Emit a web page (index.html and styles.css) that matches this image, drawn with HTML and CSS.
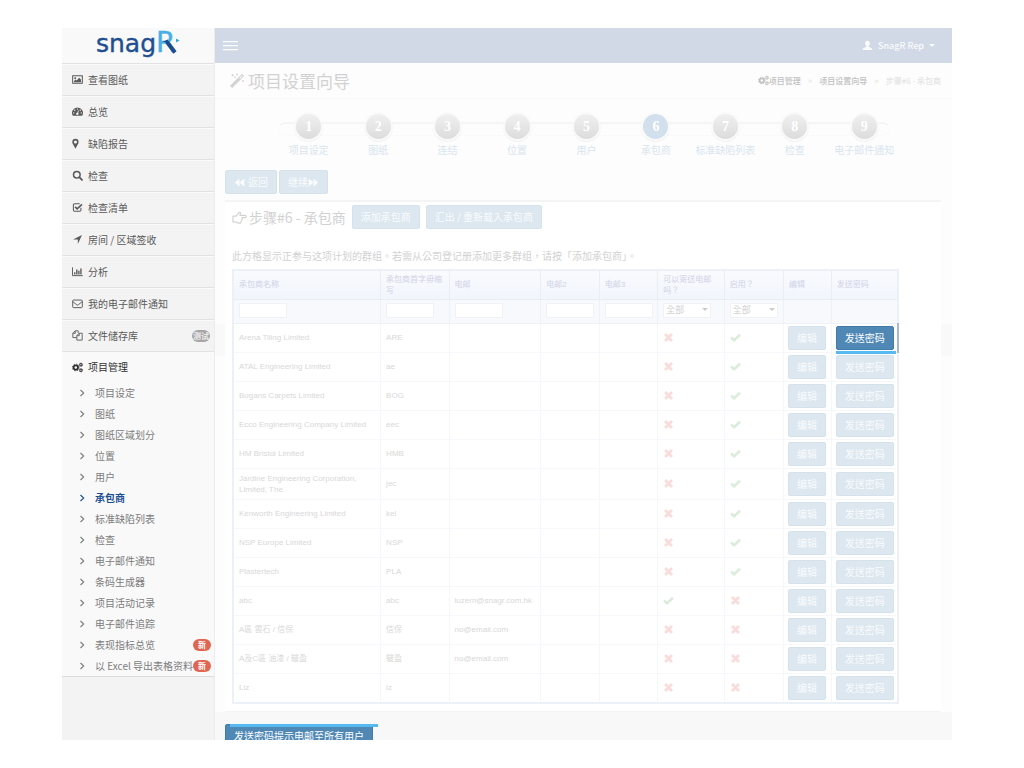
FILE: index.html
```html
<!DOCTYPE html>
<html lang="zh-Hans">
<head>
<meta charset="utf-8">
<title>项目设置向导 - snagR</title>
<link rel="stylesheet" href="styles.css">
</head>
<body>
<svg class="sprite" aria-hidden="true">
  <symbol id="i-image" viewBox="0 0 16 16"><path d="M1 2.5h14v11H1z" fill="none" stroke="currentColor" stroke-width="1.5"/><circle cx="4.7" cy="6" r="1.4"/><path d="M3 12V10l2.200-2 1.500 1.500L10.500 5.500 13 8v4z"/></symbol>
  <symbol id="i-dash" viewBox="0 0 16 16"><path fill-rule="evenodd" d="M8 2a8 8 0 0 1 6.800 12.200H1.200A8 8 0 0 1 8 2zM8 3.500a1 1 0 1 0 0 2 1 1 0 0 0 0-2zM4 5.200a1 1 0 1 0 0 2 1 1 0 0 0 0-2zM2.500 9a1 1 0 1 0 0 2 1 1 0 0 0 0-2zM13.500 9a1 1 0 1 0 0 2 1 1 0 0 0 0-2zM12 5.200a1 1 0 1 0 0 2 1 1 0 0 0 0-2zM9 6.500 7.600 9.700a1.700 1.700 0 1 0 1.400.4l1-3.400z"/></symbol>
  <symbol id="i-pin" viewBox="0 0 16 16"><path fill-rule="evenodd" d="M5 1a4.700 4.700 0 0 1 4.600 4.800c0 1-.3 1.800-.7 2.600L5 15.500 1.100 8.400a5 5 0 0 1-.7-2.600A4.700 4.700 0 0 1 5 1zm0 2.500a2.300 2.300 0 1 0 0 4.600 2.300 2.300 0 0 0 0-4.600z"/></symbol>
  <symbol id="i-search" viewBox="0 0 16 16"><circle cx="7" cy="7" r="4.800" fill="none" stroke="currentColor" stroke-width="2.200"/><path d="M10.500 10.500 14.500 14.500" stroke="currentColor" stroke-width="2.600" stroke-linecap="round"/></symbol>
  <symbol id="i-check-sq" viewBox="0 0 16 16"><path d="M13 8.500v3.200a1.800 1.800 0 0 1-1.800 1.800H3.800A1.800 1.800 0 0 1 2 11.700V4.300a1.800 1.800 0 0 1 1.800-1.800h7.400" fill="none" stroke="currentColor" stroke-width="1.500"/><path d="M4.500 7l3 3L14.500 3.500" fill="none" stroke="currentColor" stroke-width="2.400"/></symbol>
  <symbol id="i-arrow" viewBox="0 0 16 16"><path d="M14.500 1.500 8.500 14.500V8H1.500z"/></symbol>
  <symbol id="i-chart" viewBox="0 0 16 16"><path d="M.7 2v12h15" fill="none" stroke="currentColor" stroke-width="1.400"/><path d="M3 9h2v3.500H3zM6 5h2v7.500H6zM9 7h2v5.500H9zM12 3.500h2v9h-2z"/></symbol>
  <symbol id="i-mail" viewBox="0 0 16 16"><rect x="1" y="3" width="14" height="11" rx="1.200" fill="none" stroke="currentColor" stroke-width="1.400"/><path d="M1.500 5.500 7 10q1 .7 2 0l5.500-4.500" fill="none" stroke="currentColor" stroke-width="1.400"/></symbol>
  <symbol id="i-copy" viewBox="0 0 16 16"><path d="M7 11H1.200V4.800L4.800 1.200H9v3M4.800 1.200v3.600H1.200M7 8.300l3.300-3.600h4.500v10H7zM10.500 4.700v3.600H7" fill="none" stroke="currentColor" stroke-width="1.300"/></symbol>
  <symbol id="i-cogs" viewBox="0 0 16 16"><circle cx="5.500" cy="8" r="3.200" fill="none" stroke="currentColor" stroke-width="2.600"/><circle cx="5.500" cy="8" r="4.900" fill="none" stroke="currentColor" stroke-width="1.300" stroke-dasharray="1.900 1.950"/><circle cx="13" cy="4" r="1.700" fill="none" stroke="currentColor" stroke-width="1.500"/><circle cx="13" cy="4" r="2.600" fill="none" stroke="currentColor" stroke-width=".8" stroke-dasharray="1.300 1.300"/><circle cx="13" cy="12" r="1.700" fill="none" stroke="currentColor" stroke-width="1.500"/><circle cx="13" cy="12" r="2.600" fill="none" stroke="currentColor" stroke-width=".8" stroke-dasharray="1.300 1.300"/></symbol>
  <symbol id="i-angle" viewBox="0 0 8 8"><path d="M2.500 1 5.700 4 2.500 7" fill="none" stroke="currentColor" stroke-width="1.100"/></symbol>
  <symbol id="i-wand" viewBox="0 0 16 16"><path fill-rule="evenodd" d="M13 .8 15.200 3 3.200 15 1 12.800zM13 2.200 10.300 4.900l.8.8L13.800 3z"/><path d="M3.500 1v2.600M2.200 2.300h2.600M8 .5v2M7 1.500h2M6 3.500v1.600M5.200 4.300h1.600M14 7v2M13 8h2" stroke="currentColor" stroke-width=".8"/></symbol>
  <symbol id="i-hand" viewBox="0 0 16 16"><path d="M1 6.500h3.500L7.500 2.500q1.800-.5 1.500 1.500L8.300 5.700H14q1.200.2 1.200 1.200T14 8.100h-3.200q1 1.400-.5 2.300.6 1.400-.7 2 .2 1.600-1.600 1.600-2 .1-3.500-1.200H1z" fill="none" stroke="currentColor" stroke-width="1.200" stroke-linejoin="round"/></symbol>
  <symbol id="i-back" viewBox="0 0 16 16"><path d="M8 2v12L1 8zM15 2v12L8 8z"/></symbol>
  <symbol id="i-next" viewBox="0 0 16 16"><path d="M1 2v12l7-6zM8 2v12l7-6z"/></symbol>
  <symbol id="i-user" viewBox="0 0 16 16"><path d="M8 1c2.300 0 3.500 1.600 3.500 3.700 0 1.700-.7 3.200-1.800 4v1.200c.8 1 5.300 1.300 5.300 4.600H1c0-3.300 4.500-3.600 5.300-4.600V8.700c-1.100-.8-1.800-2.300-1.800-4C4.500 2.600 5.700 1 8 1z"/></symbol>
  <symbol id="i-x" viewBox="0 0 16 16"><path d="M3 3l10 10M13 3 3 13" stroke="currentColor" stroke-width="4.200"/></symbol>
  <symbol id="i-ok" viewBox="0 0 16 16"><path d="M1.500 8 6 12 14.500 4" fill="none" stroke="currentColor" stroke-width="3.800"/></symbol>
</svg>

<div class="shell">
  <aside class="sidebar">
    <a class="logo" href="#" aria-label="snagR">
      <svg width="86" height="34" viewBox="0 0 86 34">
        <text class="logo-snag" x="1" y="24">snag</text>
        <text class="logo-r" x="61" y="24">R</text>
        <path d="M72 14 80 24.500" stroke="#1c4c8c" stroke-width="4"/>
        <path d="M68 13.500l5-2v4z" fill="#1c4c8c"/>
        <path d="M81 10.500l3.500 2-3.500 2z" fill="#35a6de"/>
      </svg>
    </a>
    <nav>
      <ul class="menu">
        <li><a href="#"><svg class="icon"><use href="#i-image"/></svg>查看图纸</a></li>
        <li><a href="#"><svg class="icon"><use href="#i-dash"/></svg>总览</a></li>
        <li><a href="#"><svg class="icon"><use href="#i-pin"/></svg>缺陷报告</a></li>
        <li><a href="#"><svg class="icon"><use href="#i-search"/></svg>检查</a></li>
        <li><a href="#"><svg class="icon"><use href="#i-check-sq"/></svg>检查清单</a></li>
        <li><a href="#"><svg class="icon"><use href="#i-arrow"/></svg>房间 / 区域签收</a></li>
        <li><a href="#"><svg class="icon"><use href="#i-chart"/></svg>分析</a></li>
        <li><a href="#"><svg class="icon"><use href="#i-mail"/></svg>我的电子邮件通知</a></li>
        <li><a href="#"><svg class="icon"><use href="#i-copy"/></svg>文件储存库<span class="badge badge-grey">测试</span></a></li>
        <li class="open"><a href="#"><svg class="icon"><use href="#i-cogs"/></svg>项目管理</a>
          <ul class="submenu">
            <li><a href="#"><svg class="angle"><use href="#i-angle"/></svg>项目设定</a></li>
            <li><a href="#"><svg class="angle"><use href="#i-angle"/></svg>图纸</a></li>
            <li><a href="#"><svg class="angle"><use href="#i-angle"/></svg>图纸区域划分</a></li>
            <li><a href="#"><svg class="angle"><use href="#i-angle"/></svg>位置</a></li>
            <li><a href="#"><svg class="angle"><use href="#i-angle"/></svg>用户</a></li>
            <li><a class="current" href="#"><svg class="angle"><use href="#i-angle"/></svg>承包商</a></li>
            <li><a href="#"><svg class="angle"><use href="#i-angle"/></svg>标准缺陷列表</a></li>
            <li><a href="#"><svg class="angle"><use href="#i-angle"/></svg>检查</a></li>
            <li><a href="#"><svg class="angle"><use href="#i-angle"/></svg>电子邮件通知</a></li>
            <li><a href="#"><svg class="angle"><use href="#i-angle"/></svg>条码生成器</a></li>
            <li><a href="#"><svg class="angle"><use href="#i-angle"/></svg>项目活动记录</a></li>
            <li><a href="#"><svg class="angle"><use href="#i-angle"/></svg>电子邮件追踪</a></li>
            <li><a href="#"><svg class="angle"><use href="#i-angle"/></svg>表现指标总览<span class="badge badge-red">新</span></a></li>
            <li><a href="#"><svg class="angle"><use href="#i-angle"/></svg>以 Excel 导出表格资料<span class="badge badge-red">新</span></a></li>
          </ul>
        </li>
      </ul>
    </nav>
  </aside>

  <div class="main" lang="zh-Hant">
    <header class="topbar">
      <button class="burger" type="button" aria-label="菜单"><span></span><span></span><span></span></button>
      <button class="user" type="button"><svg class="icon"><use href="#i-user"/></svg>SnagR Rep<span class="caret"></span></button>
    </header>
    <div class="titlebar">
      <h1><svg class="icon-lg"><use href="#i-wand"/></svg>项目设置向导</h1>
      <nav class="crumbs"><a href="#"><svg class="icon"><use href="#i-cogs"/></svg>项目管理</a><span>&gt;</span><a href="#">项目设置向导</a><span>&gt;</span><span>步骤#6 - 承包商</span></nav>
    </div>

    <div class="content">
      <ol class="steps">
        <li><a href="#"><b>1</b>项目设定</a></li>
        <li><a href="#"><b>2</b>图纸</a></li>
        <li><a href="#"><b>3</b>连结</a></li>
        <li><a href="#"><b>4</b>位置</a></li>
        <li><a href="#"><b>5</b>用户</a></li>
        <li class="active"><a href="#"><b>6</b>承包商</a></li>
        <li><a href="#"><b>7</b>标准缺陷列表</a></li>
        <li><a href="#"><b>8</b>检查</a></li>
        <li><a href="#"><b>9</b>电子邮件通知</a></li>
      </ol>
      <div class="pager">
        <button class="btn" type="button"><svg class="icon back"><use href="#i-back"/></svg>返回</button>
        <button class="btn" type="button">继续<svg class="icon"><use href="#i-next"/></svg></button>
      </div>

      <section class="panel">
        <div class="panel-head">
          <h2><svg class="icon-md"><use href="#i-hand"/></svg>步骤#6 - 承包商</h2>
          <button class="btn" type="button">添加承包商</button>
          <button class="btn" type="button">汇出 / 重新载入承包商</button>
        </div>
        <p class="help">此方格显示正参与这项计划的群组。若需从公司登记册添加更多群组，请按「添加承包商」。</p>
        <table class="grid">
          <colgroup><col class="c-name"><col class="c-init"><col class="c-mail"><col class="c-mail2"><col class="c-mail2"><col class="c-can"><col class="c-on"><col class="c-edit"><col class="c-send"></colgroup>
          <thead>
            <tr><th>承包商名称</th><th>承包商首字毋缩写</th><th>电邮</th><th>电邮2</th><th>电邮3</th><th>可以寄送电邮吗？</th><th>启用？</th><th>编辑</th><th>发送密码</th></tr>
            <tr class="filter">
              <td><input type="text" aria-label="承包商名称"></td>
              <td><input type="text" aria-label="承包商首字毋缩写"></td>
              <td><input type="text" aria-label="电邮"></td>
              <td><input type="text" aria-label="电邮2"></td>
              <td><input type="text" aria-label="电邮3"></td>
              <td><span class="select"><select aria-label="可以寄送电邮吗？"><option>全部</option></select></span></td>
              <td><span class="select"><select aria-label="启用？"><option>全部</option></select></span></td>
              <td></td><td></td>
            </tr>
          </thead>
          <tbody>
            <tr><td>Arena Tiling Limited</td><td>ARE</td><td></td><td></td><td></td><td><svg class="no"><use href="#i-x"/></svg></td><td><svg class="yes"><use href="#i-ok"/></svg></td><td><button class="btn" type="button">编辑</button></td><td class="focus"><span class="marked"><button class="btn btn-strong" type="button">发送密码</button></span></td></tr>
            <tr><td>ATAL Engineering Limited</td><td>ae</td><td></td><td></td><td></td><td><svg class="no"><use href="#i-x"/></svg></td><td><svg class="yes"><use href="#i-ok"/></svg></td><td><button class="btn" type="button">编辑</button></td><td><button class="btn" type="button">发送密码</button></td></tr>
            <tr><td>Bogans Carpets Limited</td><td>BOG</td><td></td><td></td><td></td><td><svg class="no"><use href="#i-x"/></svg></td><td><svg class="yes"><use href="#i-ok"/></svg></td><td><button class="btn" type="button">编辑</button></td><td><button class="btn" type="button">发送密码</button></td></tr>
            <tr><td>Ecco Engineering Company Limited</td><td>eec</td><td></td><td></td><td></td><td><svg class="no"><use href="#i-x"/></svg></td><td><svg class="yes"><use href="#i-ok"/></svg></td><td><button class="btn" type="button">编辑</button></td><td><button class="btn" type="button">发送密码</button></td></tr>
            <tr><td>HM Bristol Limited</td><td>HMB</td><td></td><td></td><td></td><td><svg class="no"><use href="#i-x"/></svg></td><td><svg class="yes"><use href="#i-ok"/></svg></td><td><button class="btn" type="button">编辑</button></td><td><button class="btn" type="button">发送密码</button></td></tr>
            <tr><td>Jardine Engineering Corporation, Limited, The</td><td>jec</td><td></td><td></td><td></td><td><svg class="no"><use href="#i-x"/></svg></td><td><svg class="yes"><use href="#i-ok"/></svg></td><td><button class="btn" type="button">编辑</button></td><td><button class="btn" type="button">发送密码</button></td></tr>
            <tr><td>Kenworth Engineering Limited</td><td>kel</td><td></td><td></td><td></td><td><svg class="no"><use href="#i-x"/></svg></td><td><svg class="yes"><use href="#i-ok"/></svg></td><td><button class="btn" type="button">编辑</button></td><td><button class="btn" type="button">发送密码</button></td></tr>
            <tr><td>NSP Europe Limited</td><td>NSP</td><td></td><td></td><td></td><td><svg class="no"><use href="#i-x"/></svg></td><td><svg class="yes"><use href="#i-ok"/></svg></td><td><button class="btn" type="button">编辑</button></td><td><button class="btn" type="button">发送密码</button></td></tr>
            <tr><td>Plastertech</td><td>PLA</td><td></td><td></td><td></td><td><svg class="no"><use href="#i-x"/></svg></td><td><svg class="yes"><use href="#i-ok"/></svg></td><td><button class="btn" type="button">编辑</button></td><td><button class="btn" type="button">发送密码</button></td></tr>
            <tr><td>abc</td><td>abc</td><td>luzern@snagr.com.hk</td><td></td><td></td><td><svg class="yes"><use href="#i-ok"/></svg></td><td><svg class="no"><use href="#i-x"/></svg></td><td><button class="btn" type="button">编辑</button></td><td><button class="btn" type="button">发送密码</button></td></tr>
            <tr><td>A區 雲石 / 信保</td><td>信保</td><td>no@email.com</td><td></td><td></td><td><svg class="no"><use href="#i-x"/></svg></td><td><svg class="no"><use href="#i-x"/></svg></td><td><button class="btn" type="button">编辑</button></td><td><button class="btn" type="button">发送密码</button></td></tr>
            <tr><td>A及C區 油漆 / 駿盈</td><td>駿盈</td><td>no@email.com</td><td></td><td></td><td><svg class="no"><use href="#i-x"/></svg></td><td><svg class="no"><use href="#i-x"/></svg></td><td><button class="btn" type="button">编辑</button></td><td><button class="btn" type="button">发送密码</button></td></tr>
            <tr><td>Liz</td><td>lz</td><td></td><td></td><td></td><td><svg class="no"><use href="#i-x"/></svg></td><td><svg class="no"><use href="#i-x"/></svg></td><td><button class="btn" type="button">编辑</button></td><td><button class="btn" type="button">发送密码</button></td></tr>
          </tbody>
        </table>
      </section>
    </div>

    <footer class="foot">
      <span class="marked marked-top"><button class="btn btn-strong" type="button">发送密码提示电邮至所有用户</button></span>
    </footer>
  </div>
</div>
</body>
</html>
```
FILE: styles.css
```css
* { box-sizing: border-box; }

body {
  margin: 0;
  padding: 28px 72px 28px 62px;
  height: 100vh;
  background: #fff;
  font: 10px/14px "Noto Sans CJK TC", "Noto Sans CJK SC", sans-serif;
  color: #d2d2d2;
}

ul, ol { margin: 0; padding: 0; list-style: none; }
h1, h2, p { margin: 0; font-weight: 400; }
a { color: inherit; text-decoration: none; }
button, input, select { font: inherit; color: inherit; }
svg { flex: none; fill: currentColor; }

.sprite { position: absolute; width: 0; height: 0; }
.icon { width: 11px; height: 11px; }
.icon-md { width: 15px; height: 15px; }
.icon-lg { width: 16px; height: 16px; }

.shell { display: flex; height: 100%; overflow: hidden; }

/* Sidebar */
.sidebar {
  flex: none;
  width: 153px;
  background: #f3f3f3;
  border-right: 1px solid #ececec;
  color: #5a5a5a;
  font-family: "Noto Sans CJK SC", sans-serif;
}
.logo { display: flex; justify-content: center; height: 35px; background: #f9f9f9; }
.logo svg { overflow: visible; }
.logo-snag { font: 25px "DejaVu Sans", sans-serif; fill: #1f4f91; stroke: #1f4f91; stroke-width: .4; }
.logo-r { font: 28px "DejaVu Sans", sans-serif; fill: #48b0e4; stroke: #48b0e4; stroke-width: .4; }
.menu > li { border-top: 1px solid #e2e2e2; box-shadow: inset 0 1px #fafafa; }
.menu > li > a { display: flex; align-items: center; gap: 5px; height: 31px; padding: 0 4px 0 10px; }
.menu > .open { background: #f9f9f9; border-bottom: 1px solid #dcdcdc; }
.menu > .open > a { height: 30px; color: #303030; }
.submenu a { display: flex; align-items: center; height: 21px; padding: 0 3px 0 16px; color: #7c7c7c; white-space: nowrap; }
.submenu .current { color: #1d4f91; font-weight: 700; }
.angle { width: 8px; height: 8px; margin-right: 9px; }
.badge {
  margin-left: auto;
  padding: 0 5px;
  border-radius: 6px;
  font-size: 8px;
  line-height: 12px;
  font-weight: 700;
  text-align: center;
  color: #fff;
}
.badge-grey { padding: 0 1px; background: #a6a6a6; color: #ececec; }
.badge-red { background: #e06653; }

/* Top bars */
.main { flex: 1; min-width: 0; display: flex; flex-direction: column; background: #fdfdfd; }
.topbar { flex: none; display: flex; align-items: center; justify-content: space-between; height: 35px; padding: 0 17px 0 8px; background: #d1d9e6; color: #fafbfd; }
.burger { display: grid; gap: 3px; width: 15px; padding: 0; border: 0; background: none; }
.burger span { height: 1px; background: #fafbfd; box-shadow: 0 1px #dde3ed; }
.user { display: flex; align-items: center; gap: 5px; padding: 0; border: 0; background: none; font-size: 9px; font-weight: 500; }
.caret { border: 3px solid transparent; border-top-color: currentColor; border-bottom: 0; }
.titlebar { flex: none; display: flex; align-items: center; justify-content: space-between; height: 36px; padding: 0 11px 0 14px; border-bottom: 1px solid #f8f8f8; }
h1 { display: flex; align-items: center; gap: 3px; font-size: 17px; line-height: 24px; }
.crumbs { display: flex; align-items: center; gap: 7px; font-size: 8px; color: #dedede; }
.crumbs a { display: flex; align-items: center; color: #c0c0c0; font-weight: 500; }

/* Wizard steps */
.content {
  flex: none;
  padding: 15px 11px 0 10px;
  background: linear-gradient(transparent 225px, #f9f9f9 225px, #f9f9f9 257px, transparent 257px);
}
.steps { position: relative; display: grid; grid-template-columns: repeat(9, 1fr); margin: 0 42px 0 49px; }
.steps::before {
  content: "";
  position: absolute;
  left: 5px;
  right: 10px;
  top: 8px;
  height: 11px;
  border: 1px solid #fafafa;
  border-top: 2px solid #f5f5f5;
  border-radius: 6px;
}
.steps a { position: relative; display: grid; justify-items: center; gap: 4px; color: #d9e5ef; white-space: nowrap; }
.steps b {
  width: 25px;
  height: 25px;
  border-radius: 50%;
  background: linear-gradient(#f0f0f0, #dcdcdc);
  box-shadow: 0 0 0 2px #fafafa, 0 1px 2px 1px #dcdcdc;
  font: 700 14px/25px "Liberation Serif", serif;
  text-align: center;
  color: #fff;
}
.steps .active b { background: #d2dfec; }

/* Buttons */
.btn {
  display: inline-flex;
  align-items: center;
  justify-content: center;
  height: 24px;
  padding: 0 8px;
  border: 1px solid #d5e2ec;
  border-radius: 2px;
  background: #dce7ef;
  color: #fafcfd;
  white-space: nowrap;
}
.btn .back { margin-right: 3px; }
.btn-strong { background: #4f88b5; border-color: #427ba9; color: #fff; }
.pager { display: flex; gap: 2px; padding: 13px 0 6px; }

/* The bar underlines or overlines a highlighted action */
.marked { position: relative; display: inline-flex; vertical-align: top; }
.marked::after { content: ""; position: absolute; left: 0; right: -2px; bottom: -4px; height: 3px; background: #56b9f2; }
.marked-top::after { left: 5px; right: -5px; top: 0; bottom: auto; }

/* Panel and table */
.panel { padding: 3px 7px 7px; border-top: 2px solid #f4f4f4; background: #fff; border-bottom: 1px solid #f4f4f4; }
.panel-head { display: flex; align-items: center; gap: 6px; }
h2 { display: flex; align-items: center; gap: 2px; font-size: 14px; line-height: 24px; }
.help { margin: 20px 0 6px; }

.grid { width: 95%; table-layout: fixed; border-collapse: collapse; border: 2px solid #ecf0f7; font: 8px/11px "Liberation Sans", "Noto Sans CJK TC", sans-serif; }
.c-name { width: 22.2%; }
.c-init { width: 10.3%; }
.c-mail { width: 13.8%; }
.c-mail2 { width: 8.8%; }
.c-can { width: 10%; }
.c-on { width: 8.9%; }
.c-edit { width: 7.2%; }
.c-send { width: 10%; }
.grid th, .grid td { height: 29px; padding: 0 5px; border: 1px solid #f5f7fb; text-align: left; vertical-align: middle; }
.grid th { border-color: #e8edf6; background: linear-gradient(#f9fafd, #f1f5fc); color: #d0d2e6; font-weight: 400; }
.grid .filter td { height: 24px; padding: 3px 5px; border-color: #eef1f8; background: #f7f9fc; vertical-align: top; }
.grid tbody td { padding: 4px 5px; }
.grid tbody td:nth-last-child(-n+2) { padding: 2px 4px; }
.grid tbody { color: #d8d8d8; }
.grid svg { display: block; width: 11px; height: 11px; }
.grid .btn { display: flex; font: 10px/14px "Noto Sans CJK TC", sans-serif; }
.grid .focus { border-top-color: #c9d0df; border-right: 2px solid #a9b7cf; }
.grid input, .grid select { display: block; width: 48px; height: 15px; margin: 0; padding: 0 2px; border: 1px solid #eff2f7; border-radius: 0; background: #fff; }
.grid select { appearance: none; font-size: 9px; line-height: 13px; }
.select { position: relative; display: inline-block; }
.select::after { content: ""; position: absolute; right: 3px; top: 5px; border: 3px solid transparent; border-top-color: #ccc; border-bottom: 0; pointer-events: none; }
.no { color: #f9dcdc; }
.yes { color: #dcecdc; }

.foot { flex: 1 0 auto; padding: 12px 10px; background: #f8f8f8; }
```
